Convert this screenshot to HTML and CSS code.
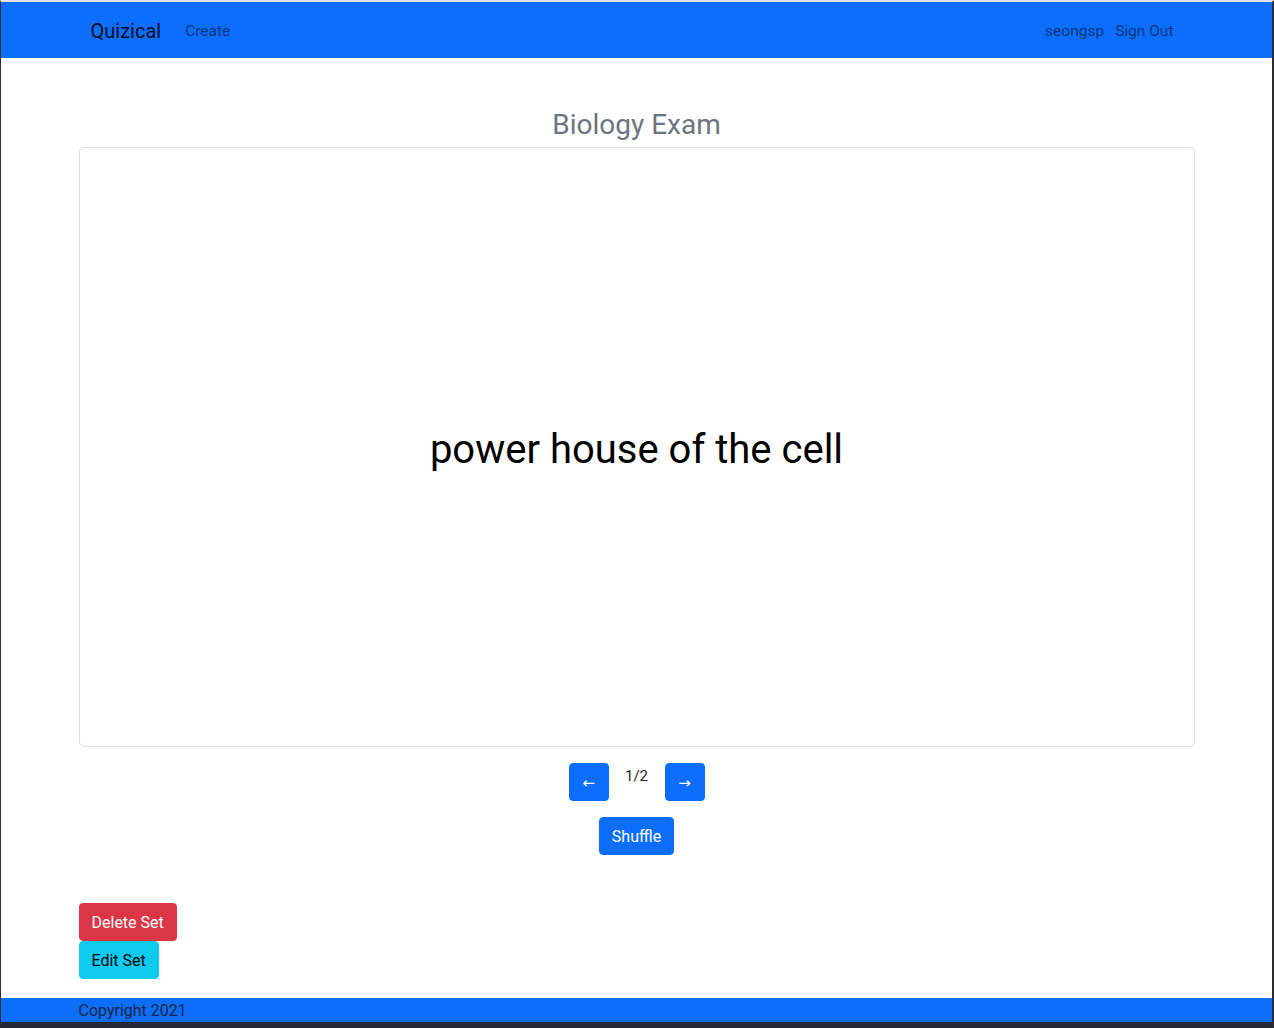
FILE: index.html
```html
<!DOCTYPE html>
<html lang="en">
<head>
<meta charset="utf-8">
<title>Quizical - Biology Exam</title>
<link rel="stylesheet" href="styles.css">
</head>
<body>
<div class="window">
  <nav class="navbar">
    <div class="nav-container">
      <a class="brand" href="#">Quizical</a>
      <a class="nav-link" href="#">Create</a>
      <div class="nav-right">
        <span class="nav-user">seongsp</span>
        <a class="nav-link nav-signout" href="#">Sign Out</a>
      </div>
    </div>
  </nav>
  <main class="container">
    <h3 class="set-title">Biology Exam</h3>
    <div class="card">
      <p class="card-term">power house of the cell</p>
    </div>
    <div class="pager">
      <button class="btn btn-primary btn-arrow">&larr;</button>
      <span class="pager-count">1/2</span>
      <button class="btn btn-primary btn-arrow">&rarr;</button>
    </div>
    <div class="shuffle-row">
      <button class="btn btn-primary">Shuffle</button>
    </div>
    <div class="actions">
      <button class="btn btn-danger">Delete Set</button>
      <button class="btn btn-info">Edit Set</button>
    </div>
  </main>
  <footer class="footer">
    <div class="container footer-inner">Copyright 2021</div>
  </footer>
</div>
</body>
</html>
```

FILE: styles.css
```css
* {
  box-sizing: border-box;
}

html, body {
  margin: 0;
  padding: 0;
  background: #232935;
}

body {
  font-family: Roboto, "Noto Sans", "Liberation Sans", sans-serif;
  font-size: 16px;
  line-height: 1.5;
  color: #212529;
}

.window {
  height: 1028px;
  display: flex;
  flex-direction: column;
  background: #ffffff;
  border-top: 2px solid #e3e3e3;
  border-left: 1px solid #2e2e2e;
  border-right: 2px solid #2e2e2e;
  border-bottom: 6px solid #232935;
}

/* Navbar */
.navbar {
  background: #0d6efd;
  height: 56px;
  padding-top: 2px;
  display: flex;
  align-items: center;
  flex-shrink: 0;
}

.nav-container {
  width: 1140px;
  margin: 0 auto;
  padding: 0 25px 0 24px;
  display: flex;
  align-items: center;
}

.brand {
  font-size: 20px;
  line-height: 30px;
  color: rgba(0, 0, 0, 0.9);
  text-decoration: none;
  margin-right: 16px;
}

.nav-link {
  font-size: 15.5px;
  line-height: 24px;
  color: rgba(0, 0, 0, 0.55);
  text-decoration: none;
  padding: 8px;
}

.nav-right {
  margin-left: auto;
  display: flex;
  align-items: center;
}

.nav-user {
  font-size: 15.5px;
  line-height: 24px;
  color: rgba(0, 0, 0, 0.55);
}

.nav-signout {
  padding-left: 11px;
}

/* Main */
.container {
  width: 1140px;
  margin: 0 auto;
  padding: 0 12px;
}

.set-title {
  margin: 50px 0 5px;
  text-align: center;
  font-size: 28px;
  font-weight: 400;
  line-height: 1.2;
  color: #6c757d;
}

.card {
  height: 600px;
  padding-top: 6px;
  border: 1px solid rgba(0, 0, 0, 0.125);
  border-radius: 5px;
  display: flex;
  align-items: center;
  justify-content: center;
}

.card-term {
  margin: 0;
  font-size: 40px;
  line-height: 1.2;
  font-weight: 400;
  color: #000000;
}

.pager {
  margin-top: 16px;
  display: flex;
  justify-content: center;
}

.pager-count {
  margin: 0 16px;
  min-width: 24px;
  text-align: center;
  line-height: 24px;
  padding-top: 1px;
  font-size: 15px;
}

.shuffle-row {
  margin-top: 16px;
  display: flex;
  justify-content: center;
}

.actions {
  margin-top: 48px;
  display: flex;
  flex-direction: column;
  align-items: flex-start;
}

/* Buttons */
.btn {
  font-family: inherit;
  font-size: 16px;
  line-height: 24px;
  padding: 7px 12px 5px;
  border: 1px solid transparent;
  border-radius: 4px;
  cursor: pointer;
}

.btn-primary {
  background: #0d6efd;
  border-color: #0d6efd;
  color: #ffffff;
}

.btn-arrow {
  width: 40px;
  padding: 7px 0 5px;
  text-align: center;
  font-family: "DejaVu Sans", sans-serif;
  font-size: 15px;
}

.btn-danger {
  background: #dc3545;
  border-color: #dc3545;
  color: #ffffff;
}

.btn-info {
  background: #0dcaf0;
  border-color: #0dcaf0;
  color: #000000;
}

/* Footer */
.footer {
  margin-top: auto;
  background: #0d6efd;
  height: 24px;
  flex-shrink: 0;
}

.footer-inner {
  line-height: 24px;
  padding-top: 1px;
  color: #1c2640;
}
```
